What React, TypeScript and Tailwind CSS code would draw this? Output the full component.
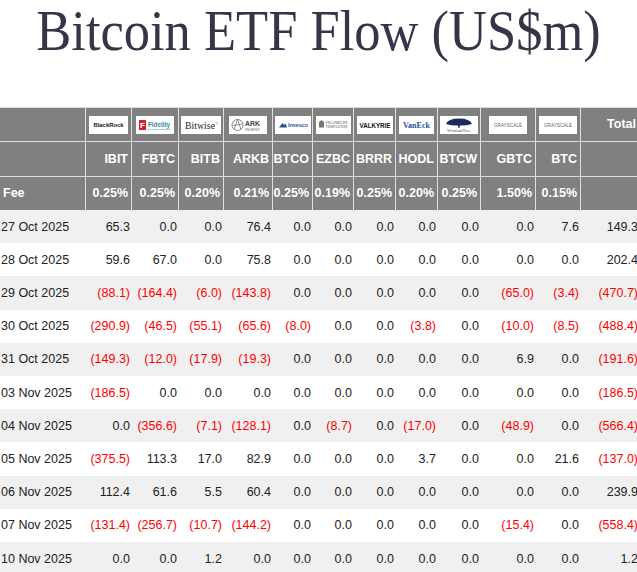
import React from "react";

const COLS = "grid grid-cols-[86px_46px_47px_45px_49px_40px_41px_42px_42px_43px_55px_45px_59px]";

const tickers = ["IBIT", "FBTC", "BITB", "ARKB", "BTCO", "EZBC", "BRRR", "HODL", "BTCW", "GBTC", "BTC"];
const fees = ["0.25%", "0.25%", "0.20%", "0.21%", "0.25%", "0.19%", "0.25%", "0.20%", "0.25%", "1.50%", "0.15%"];

const rows: [string, string[]][] = [
  ["27 Oct 2025", ["65.3", "0.0", "0.0", "76.4", "0.0", "0.0", "0.0", "0.0", "0.0", "0.0", "7.6", "149.3"]],
  ["28 Oct 2025", ["59.6", "67.0", "0.0", "75.8", "0.0", "0.0", "0.0", "0.0", "0.0", "0.0", "0.0", "202.4"]],
  ["29 Oct 2025", ["(88.1)", "(164.4)", "(6.0)", "(143.8)", "0.0", "0.0", "0.0", "0.0", "0.0", "(65.0)", "(3.4)", "(470.7)"]],
  ["30 Oct 2025", ["(290.9)", "(46.5)", "(55.1)", "(65.6)", "(8.0)", "0.0", "0.0", "(3.8)", "0.0", "(10.0)", "(8.5)", "(488.4)"]],
  ["31 Oct 2025", ["(149.3)", "(12.0)", "(17.9)", "(19.3)", "0.0", "0.0", "0.0", "0.0", "0.0", "6.9", "0.0", "(191.6)"]],
  ["03 Nov 2025", ["(186.5)", "0.0", "0.0", "0.0", "0.0", "0.0", "0.0", "0.0", "0.0", "0.0", "0.0", "(186.5)"]],
  ["04 Nov 2025", ["0.0", "(356.6)", "(7.1)", "(128.1)", "0.0", "(8.7)", "0.0", "(17.0)", "0.0", "(48.9)", "0.0", "(566.4)"]],
  ["05 Nov 2025", ["(375.5)", "113.3", "17.0", "82.9", "0.0", "0.0", "0.0", "3.7", "0.0", "0.0", "21.6", "(137.0)"]],
  ["06 Nov 2025", ["112.4", "61.6", "5.5", "60.4", "0.0", "0.0", "0.0", "0.0", "0.0", "0.0", "0.0", "239.9"]],
  ["07 Nov 2025", ["(131.4)", "(256.7)", "(10.7)", "(144.2)", "0.0", "0.0", "0.0", "0.0", "0.0", "(15.4)", "0.0", "(558.4)"]],
  ["10 Nov 2025", ["0.0", "0.0", "1.2", "0.0", "0.0", "0.0", "0.0", "0.0", "0.0", "0.0", "0.0", "1.2"]],
];

const SANS = "Liberation Sans, Arial, sans-serif";
const SERIF = "Liberation Serif, Times New Roman, serif";

function Box({ w, children }: { w: number; children: React.ReactNode }) {
  return (
    <svg width={w} height={18} viewBox={`0 0 ${w} 18`}>
      <rect width={w} height={18} fill="#fff" />
      {children}
    </svg>
  );
}

const logos: React.ReactNode[] = [
  <Box w={39} key="br">
    <text x={19.5} y={11.3} fontSize={6.2} fontWeight={700} textAnchor="middle" fontFamily={SANS} fill="#111" textLength={30} lengthAdjust="spacingAndGlyphs">BlackRock</text>
  </Box>,
  <Box w={38} key="fi">
    <rect x={3} y={4} width={7} height={10} fill="#d4202c" />
    <text x={6.5} y={12} fontSize={8} fontWeight={700} textAnchor="middle" fontFamily={SANS} fill="#fff">F</text>
    <text x={12} y={10.5} fontSize={6.3} fontWeight={700} fontFamily={SANS} fill="#3a86a0" textLength={22} lengthAdjust="spacingAndGlyphs">Fidelity</text>
    <text x={12} y={14} fontSize={2.2} fontFamily={SANS} fill="#3a86a0" textLength={22} lengthAdjust="spacingAndGlyphs">INVESTMENTS</text>
  </Box>,
  <Box w={40} key="bw">
    <text x={19} y={12.5} fontSize={9.5} textAnchor="middle" fontFamily={SERIF} fill="#222" textLength={30} lengthAdjust="spacingAndGlyphs">Bitwise</text>
    <text x={35} y={9} fontSize={3} fontFamily={SANS} fill="#444">®</text>
  </Box>,
  <Box w={38} key="ark">
    <circle cx={8.5} cy={9} r={5.5} fill="none" stroke="#555" strokeWidth={0.7} />
    <path d="M8.5 3.5 L5 13.5 M8.5 3.5 L12 13.5 M4 9.5 L13 8" fill="none" stroke="#555" strokeWidth={0.6} />
    <text x={16} y={10} fontSize={7.5} fontWeight={700} fontFamily={SANS} fill="#444" textLength={15} lengthAdjust="spacingAndGlyphs">ARK</text>
    <text x={16} y={14.5} fontSize={3.2} fontFamily={SANS} fill="#666" textLength={15} lengthAdjust="spacingAndGlyphs">INVEST</text>
  </Box>,
  <Box w={36} key="iv">
    <path d="M4 11.5 L7.5 7 L9 9 L10.5 7.5 L12 11.5 Z" fill="#1f4ea3" />
    <text x={13} y={11.3} fontSize={6} fontWeight={700} fontFamily={SANS} fill="#1f4ea3" textLength={20} lengthAdjust="spacingAndGlyphs">Invesco</text>
  </Box>,
  <Box w={35} key="ft">
    <rect x={3} y={6} width={5} height={5.5} fill="#777" />
    <path d="M2.5 6.5 L5.5 4 L8.5 6.5 Z" fill="#777" />
    <text x={9.5} y={8.3} fontSize={3} fontFamily={SERIF} fill="#555" textLength={22} lengthAdjust="spacingAndGlyphs">FRANKLIN</text>
    <text x={9.5} y={12} fontSize={3} fontFamily={SERIF} fill="#555" textLength={22} lengthAdjust="spacingAndGlyphs">TEMPLETON</text>
  </Box>,
  <Box w={36} key="vk">
    <text x={18} y={11.5} fontSize={6.5} fontWeight={700} textAnchor="middle" fontFamily={SANS} fill="#111" textLength={31} lengthAdjust="spacingAndGlyphs">VALKYRIE</text>
  </Box>,
  <Box w={35} key="ve">
    <text x={17.5} y={12} fontSize={8.5} fontWeight={700} textAnchor="middle" fontFamily={SERIF} fill="#1c4f9c" textLength={27} lengthAdjust="spacingAndGlyphs">VanEck</text>
    <text x={31.5} y={8} fontSize={3} fontFamily={SANS} fill="#1c4f9c">·</text>
  </Box>,
  <Box w={38} key="wt">
    <path d="M6 8 Q8 2.5 19 2.5 Q30 2.5 32 8 Q25 10 19 9.5 Q13 10 6 8 Z" fill="#1e2a5a" />
    <path d="M18 9 L18.5 12 L19.5 12 L20 9 Z" fill="#1e2a5a" />
    <text x={19} y={15.5} fontSize={3.2} textAnchor="middle" fontFamily={SERIF} fill="#555" textLength={24} lengthAdjust="spacingAndGlyphs">WisdomTree</text>
  </Box>,
  <Box w={38} key="gs1">
    <text x={19} y={10.8} fontSize={4.6} textAnchor="middle" fontFamily={SANS} fill="#666" textLength={28} lengthAdjust="spacingAndGlyphs">GRAYSCALE</text>
  </Box>,
  <Box w={38} key="gs2">
    <text x={19} y={10.8} fontSize={4.6} textAnchor="middle" fontFamily={SANS} fill="#666" textLength={28} lengthAdjust="spacingAndGlyphs">GRAYSCALE</text>
  </Box>,
];

export default function App() {
  return (
    <div className="w-[637px] h-[572px] overflow-hidden bg-white" style={{ fontFamily: SANS }}>
      <div className="h-[107px] pt-[3px]">
        <h1
          className="text-center text-[52.5px] leading-none text-[#35354a] scale-y-[1.07] origin-top"
          style={{ fontFamily: SERIF }}
        >
          Bitcoin ETF Flow (US$m)
        </h1>
      </div>
      <div className="w-[640px] text-[12.5px]">
        {/* header row 1: logos */}
        <div className={`${COLS} h-[34px] bg-[#808080] border-t border-[#dedede]`}>
          <div className="border-r border-[#dedede]" />
          {logos.map((l, i) => (
            <div key={i} className="flex items-center justify-center pt-[1px] border-r border-[#dedede]">
              {l}
            </div>
          ))}
          <div className="flex items-center justify-end pr-[4px] font-bold text-white">Total</div>
        </div>
        {/* header row 2: tickers */}
        <div className={`${COLS} h-[35px] bg-[#808080] border-t border-[#dedede]`}>
          <div className="border-r border-[#dedede]" />
          {tickers.map((t) => (
            <div key={t} className="flex items-center justify-end pr-[3px] font-bold text-white border-r border-[#dedede]">
              {t}
            </div>
          ))}
          <div />
        </div>
        {/* header row 3: fee */}
        <div className={`${COLS} h-[34px] bg-[#808080] border-t border-[#dedede]`}>
          <div className="flex items-center pl-[3px] font-bold text-white border-r border-[#dedede]">Fee</div>
          {fees.map((f, i) => (
            <div key={i} className="flex items-center justify-end pr-[3px] font-bold text-white border-r border-[#dedede]">
              {f}
            </div>
          ))}
          <div />
        </div>
        {/* body */}
        {rows.map(([d, vals], ri) => (
          <div key={d} className={`${COLS} h-[33.2px] pt-[1px] ${ri % 2 === 0 ? "bg-[#f0f0f0]" : "bg-white"} text-[#222]`}>
            <div className="flex items-center pl-[1px] whitespace-nowrap">{d}</div>
            {vals.map((v, i) => (
              <div
                key={i}
                className={`flex items-center justify-end pr-[2px] whitespace-nowrap ${v.startsWith("(") ? "text-[#f00]" : ""}`}
              >
                {v}
              </div>
            ))}
          </div>
        ))}
      </div>
    </div>
  );
}
